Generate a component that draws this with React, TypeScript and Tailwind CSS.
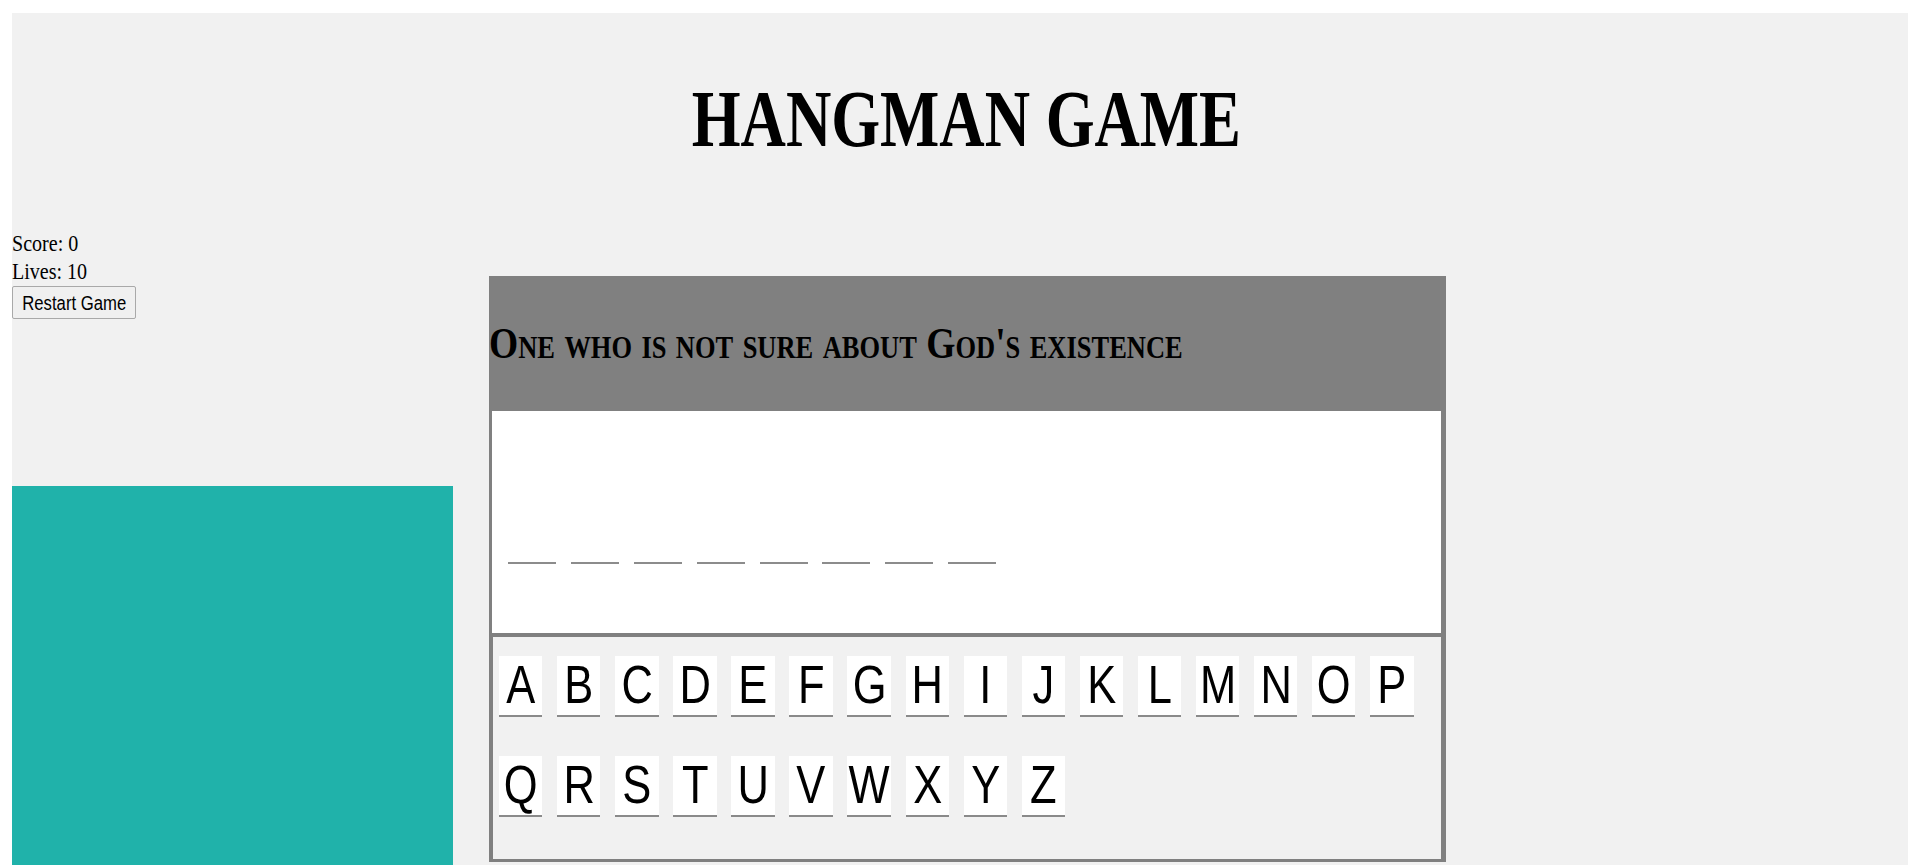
const LETTERS = "ABCDEFGHIJKLMNOPQRSTUVWXYZ".split("");
const WORD_LENGTH = 8;

function LetterKey({ letter }: { letter: string }) {
  return (
    <div className="flex h-[61px] w-[43.4px] justify-center border-b-2 border-[#8a8a8a] bg-white pt-[2px]">
      <span className="inline-block origin-center scale-x-[0.82] font-['Liberation_Sans',Arial,sans-serif] text-[53px] leading-none text-black">
        {letter}
      </span>
    </div>
  );
}

export default function App() {
  return (
    <div className="h-screen overflow-hidden bg-white pl-[12px] pt-[13px]">
      <div className="h-[852px] overflow-hidden bg-[#f1f1f1] font-['Liberation_Serif','Times_New_Roman',serif] text-black">
        <div className="flex justify-center pl-[12px] pt-[66px]">
          <h1 className="inline-block origin-center scale-x-[0.775] text-[81px] font-bold leading-none">HANGMAN GAME</h1>
        </div>

        <div className="mt-[70px] flex items-start">
          <div className="flex w-[441px] flex-col">
            <div className="h-[27.6px] text-[24px] leading-[27.6px]">
              <span className="inline-block origin-left scale-x-[0.835]">Score: 0</span>
            </div>
            <div className="h-[27.6px] text-[24px] leading-[27.6px]">
              <span className="inline-block origin-left scale-x-[0.835]">Lives: 10</span>
            </div>
            <button className="mt-px flex h-[33px] w-[124px] items-center justify-center rounded-[2px] border border-[#a9a9a9] bg-[#f0f0f0] font-['Liberation_Sans',Arial,sans-serif] text-[20px] text-black">
              <span className="inline-block origin-center scale-x-[0.835] whitespace-nowrap">Restart Game</span>
            </button>
            <div className="mt-[167px] h-[379px] w-[441px] bg-[#20b2aa]" />
          </div>

          <div className="ml-[36px] mt-[46px] flex w-[957px] flex-col bg-[#808080]">
            <div className="flex h-[135px] items-center">
              <h2 className="inline-block origin-left scale-x-[0.854] whitespace-nowrap text-[44px] font-bold leading-none [font-variant:small-caps]">
                One who is not sure about God's existence
              </h2>
            </div>
            <div className="ml-[3px] mr-[5px] h-[222px] bg-white pl-[16px] pt-[151px]">
              <div className="flex gap-[14.9px]">
                {Array.from({ length: WORD_LENGTH }).map((_, i) => (
                  <div key={i} className="h-[2px] w-[48px] bg-[#8c8c8c]" />
                ))}
              </div>
            </div>
            <div className="mb-[3px] ml-[4px] mr-[5px] mt-[4px] h-[222px] bg-[#f1f1f1] pl-[6px] pt-[19px]">
              <div className="flex flex-wrap gap-x-[14.7px] gap-y-[39px]">
                {LETTERS.map((l) => (
                  <LetterKey key={l} letter={l} />
                ))}
              </div>
            </div>
          </div>
        </div>
      </div>
    </div>
  );
}
